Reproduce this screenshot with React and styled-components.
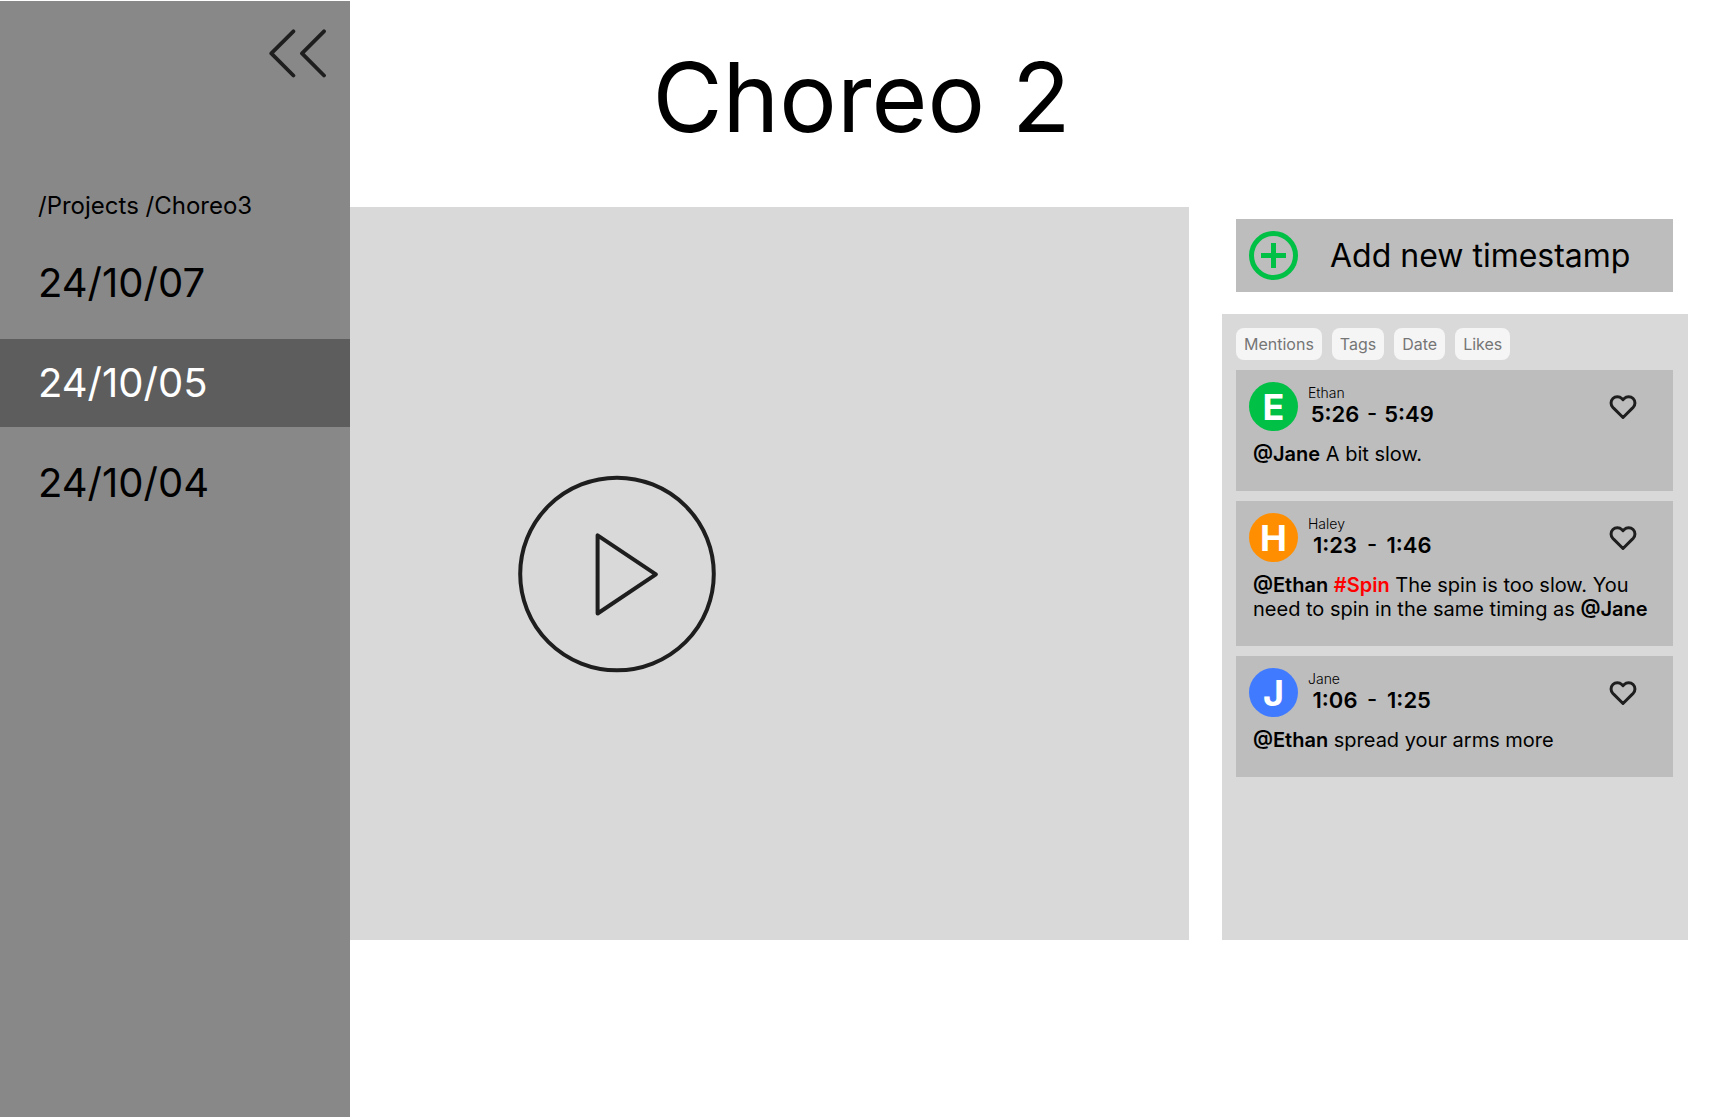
import React, { useState } from "react";
import styled, { createGlobalStyle } from "styled-components";

const GlobalStyle = createGlobalStyle`
  *, *::before, *::after { box-sizing: border-box; }
  body {
    margin: 0;
    background: #ffffff;
    color: #000000;
    font-family: Inter, "Liberation Sans", sans-serif;
  }
  button { font: inherit; color: inherit; border: 0; padding: 0; background: none; cursor: pointer; }
  h1, p, ul, ol { margin: 0; padding: 0; }
  ul, ol { list-style: none; }
  svg { display: block; }
`;

/* The drawer and the workspace share one grid cell, so the drawer covers the workspace. */
const Page = styled.div`
  display: grid;
  min-height: 100vh;
`;

const Drawer = styled.aside`
  grid-area: 1 / 1;
  z-index: 1;
  justify-self: start;
  display: flex;
  flex-direction: column;
  width: 350px;
  margin-top: 1px;
  padding-top: 28px;
  background: #888888;
`;

const CollapseButton = styled.button`
  align-self: flex-end;
  margin-right: 24px;
`;

const Breadcrumb = styled.nav`
  margin: 113px 0 19px;
  padding-left: 38px;
  font-size: 24px;
  line-height: 29px;

  a { color: inherit; text-decoration: none; }
`;

const DateList = styled.ul`
  display: flex;
  flex-direction: column;
  gap: 12px;
`;

const DateButton = styled.button`
  display: block;
  width: 100%;
  height: 88px;
  padding-left: 38px;
  text-align: left;
  font-size: 40px;
  line-height: 48px;
  color: ${({ $active }) => ($active ? "#ffffff" : "#000000")};
  background: ${({ $active }) => ($active ? "#5d5d5d" : "transparent")};
`;

const Workspace = styled.main`
  grid-area: 1 / 1;
  min-width: 0;
  padding: 39px 40px 40px 45px;
`;

const Title = styled.h1`
  margin-bottom: 52px;
  padding-right: 10px;
  text-align: center;
  font-size: 96px;
  font-weight: 400;
  line-height: 116px;
`;

const Stage = styled.div`
  display: flex;
  gap: 33px;
  min-height: 733px;
`;

const Video = styled.section`
  flex: 1;
  display: flex;
  align-items: center;
  justify-content: center;
  background: #d9d9d9;
`;

const Side = styled.div`
  flex: 0 0 466px;
  display: flex;
  flex-direction: column;
  gap: 22px;
  padding-top: 12px;
`;

const AddButton = styled.button`
  display: flex;
  align-items: center;
  gap: 32px;
  margin: 0 15px 0 14px;
  padding: 12px 13px;
  background: #bdbdbd;
  font-size: 32px;
  line-height: 39px;
`;

const Comments = styled.section`
  flex: 1;
  display: flex;
  flex-direction: column;
  gap: 10px;
  padding: 14px 15px 14px 14px;
  background: #d9d9d9;
`;

const Filters = styled.div`
  display: flex;
  gap: 10px;
`;

const Chip = styled.button`
  padding: 8px;
  border-radius: 8px;
  background: #f5f5f5;
  color: #757575;
  font-size: 16px;
  line-height: 16px;
`;

const CommentList = styled.ol`
  display: flex;
  flex-direction: column;
  gap: 10px;
`;

const Card = styled.li`
  padding: 12px 13px 25px;
  background: #bdbdbd;
`;

const CardHeader = styled.div`
  display: flex;
  gap: 10px;
  margin-bottom: 11px;
`;

const Avatar = styled.span`
  display: grid;
  place-items: center;
  width: 49px;
  height: 49px;
  border-radius: 50%;
  background: ${({ $color }) => $color};
  color: #ffffff;
  font-size: 36px;
  font-weight: 700;
  line-height: 44px;
`;

const Meta = styled.div`
  flex: 1;
  padding-top: 2px;
`;

const Author = styled.div`
  font-size: 14px;
  font-weight: 300;
  line-height: 17px;
`;

const Range = styled.div`
  display: grid;
  grid-template-columns: 54px 20px 54px;
  text-align: center;
  font-size: 22px;
  font-weight: 600;
  line-height: 27px;
`;

/* The "case" feature lifts the dash to the middle of the digits. */
const Dash = styled.span`
  font-weight: 500;
  font-feature-settings: "case";
`;

const LikeButton = styled.button`
  align-self: flex-start;
  margin: 9px 21px 0 0;
`;

const Message = styled.p`
  padding: 0 4px;
  font-size: 20px;
  line-height: 24px;
`;

const Mention = styled.strong`
  font-weight: 600;
`;

const Tag = styled(Mention)`
  color: #ff0000;
`;

const DATES = ["24/10/07", "24/10/05", "24/10/04"];
const FILTERS = ["Mentions", "Tags", "Date", "Likes"];

const COMMENTS = [
  {
    author: "Ethan",
    color: "#00c046",
    from: "5:26",
    to: "5:49",
    body: <><Mention>@Jane</Mention> A bit slow.</>,
  },
  {
    author: "Haley",
    color: "#ff8f00",
    from: "1:23",
    to: "1:46",
    body: (
      <>
        <Mention>@Ethan</Mention> <Tag>#Spin</Tag> The spin is too slow. You need to spin
        in the same timing as <Mention>@Jane</Mention>
      </>
    ),
  },
  {
    author: "Jane",
    color: "#407bff",
    from: "1:06",
    to: "1:25",
    body: <><Mention>@Ethan</Mention> spread your arms more</>,
  },
];

const stroke = { fill: "none", stroke: "#1e1e1e", strokeLinecap: "round", strokeLinejoin: "round" };

const CollapseIcon = () => (
  <svg width="57" height="49" viewBox="0 0 57 49" strokeWidth="3.8" {...stroke}>
    <path d="M24.4 2.3 2.3 24.4l22.1 22.1M55 2.3 33 24.4l22 22.1" />
  </svg>
);

const PlayIcon = () => (
  <svg width="198" height="198" viewBox="0 0 198 198" strokeWidth="4" {...stroke}>
    <ellipse cx="99" cy="99" rx="96.8" ry="96.3" />
    <path d="M79.6 60.3v78.2l58.3-39.1z" />
  </svg>
);

const PlusIcon = () => (
  <svg width="49" height="49" viewBox="0 0 49 49" fill="none" stroke="#00c046" strokeWidth="5">
    <circle cx="24.5" cy="24.5" r="22" />
    <path d="M24.5 12v25M12 24.5h25" />
  </svg>
);

const HeartIcon = () => (
  <svg width="32" height="32" viewBox="-2 -2 28 28" strokeWidth="2.6" {...stroke}>
    <path d="M20.84 4.61a5.5 5.5 0 0 0-7.78 0L12 5.67l-1.06-1.06a5.5 5.5 0 0 0-7.78 7.78l1.06 1.06L12 21.23l7.78-7.78 1.06-1.06a5.5 5.5 0 0 0 0-7.78z" />
  </svg>
);

export default function App() {
  const [active, setActive] = useState("24/10/05");

  return (
    <Page>
      <GlobalStyle />
      <Drawer>
        <CollapseButton type="button" aria-label="Collapse sidebar">
          <CollapseIcon />
        </CollapseButton>
        <Breadcrumb>
          <a href="#projects">/Projects</a> <a href="#choreo3">/Choreo3</a>
        </Breadcrumb>
        <DateList>
          {DATES.map((date) => (
            <li key={date}>
              <DateButton type="button" $active={date === active} onClick={() => setActive(date)}>
                {date}
              </DateButton>
            </li>
          ))}
        </DateList>
      </Drawer>

      <Workspace>
        <Title>Choreo 2</Title>
        <Stage>
          <Video>
            <button type="button" aria-label="Play">
              <PlayIcon />
            </button>
          </Video>
          <Side>
            <AddButton type="button">
              <PlusIcon />
              Add new timestamp
            </AddButton>
            <Comments>
              <Filters>
                {FILTERS.map((name) => (
                  <Chip key={name} type="button">{name}</Chip>
                ))}
              </Filters>
              <CommentList>
                {COMMENTS.map(({ author, color, from, to, body }) => (
                  <Card key={author}>
                    <CardHeader>
                      <Avatar $color={color}>{author[0]}</Avatar>
                      <Meta>
                        <Author>{author}</Author>
                        <Range>
                          <span>{from}</span>
                          <Dash>-</Dash>
                          <span>{to}</span>
                        </Range>
                      </Meta>
                      <LikeButton type="button" aria-label="Like">
                        <HeartIcon />
                      </LikeButton>
                    </CardHeader>
                    <Message>{body}</Message>
                  </Card>
                ))}
              </CommentList>
            </Comments>
          </Side>
        </Stage>
      </Workspace>
    </Page>
  );
}
